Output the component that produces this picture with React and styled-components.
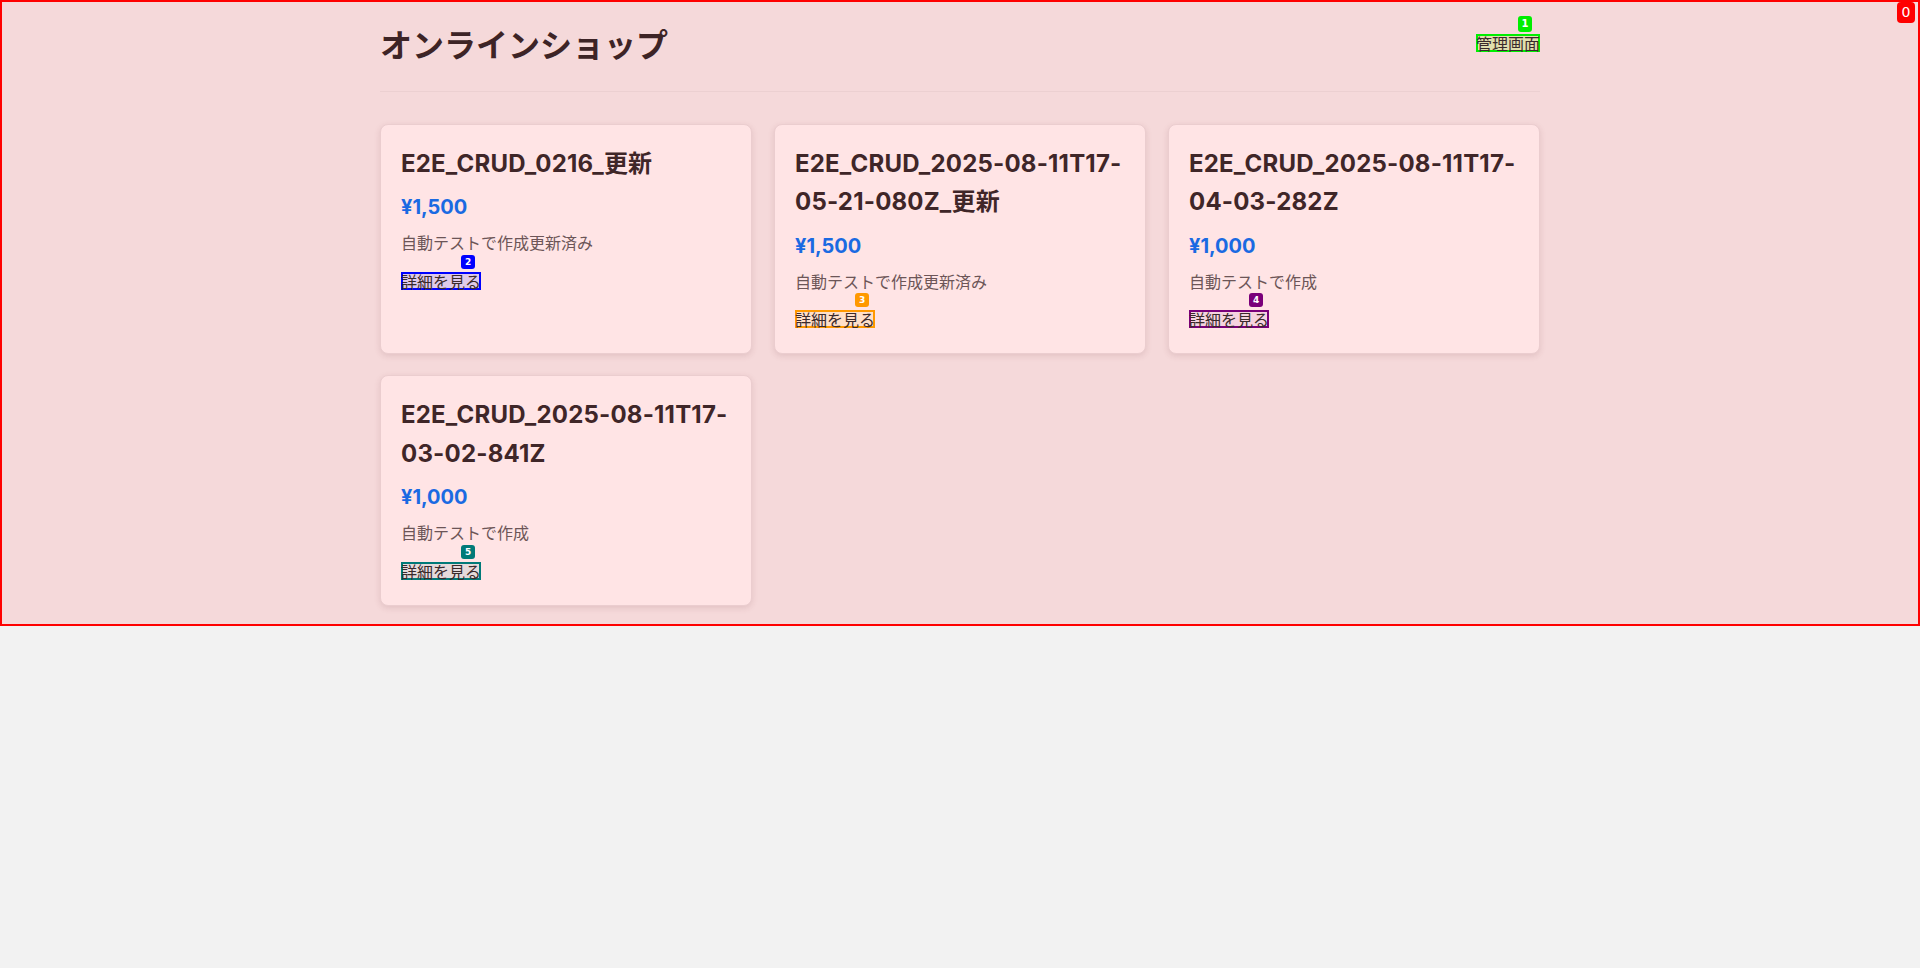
import React from "react";
import styled, { createGlobalStyle } from "styled-components";

const products = [
  { id: 1, name: "E2E_CRUD_0216_更新", price: 1500, desc: "自動テストで作成更新済み", mark: "#0000ff", fill: "rgba(80, 80, 255, 0.18)" },
  { id: 2, name: "E2E_CRUD_2025-08-11T17-05-21-080Z_更新", price: 1500, desc: "自動テストで作成更新済み", mark: "#ff9900", fill: "rgba(255, 200, 80, 0.18)" },
  { id: 3, name: "E2E_CRUD_2025-08-11T17-04-03-282Z", price: 1000, desc: "自動テストで作成", mark: "#7a007a", fill: "rgba(200, 140, 200, 0.18)" },
  { id: 4, name: "E2E_CRUD_2025-08-11T17-03-02-841Z", price: 1000, desc: "自動テストで作成", mark: "#007a78", fill: "rgba(180, 200, 200, 0.35)" }
];

const GlobalStyle = createGlobalStyle`
  body {
    margin: 0;
    background: #f2f2f2;
    font-family: Inter, "Noto Sans CJK JP", sans-serif;
  }
`;

const Page = styled.div`
  position: relative;
  background: #f5d9da;
  padding: 20px 0;
  box-shadow: inset 0 0 0 2px #ff0000;
`;

const Container = styled.div`
  max-width: 1160px;
  margin: 0 auto;
`;

const Header = styled.header`
  display: flex;
  justify-content: space-between;
  align-items: center;
  padding-bottom: 25px;
  border-bottom: 1px solid #ecd0d1;
  margin-bottom: 32px;
`;

const Title = styled.h1`
  margin: 0;
  font-family: "Noto Sans CJK JP", sans-serif;
  font-size: 32px;
  font-weight: 700;
  line-height: 46px;
  color: #3d2426;
`;

const Grid = styled.div`
  display: grid;
  grid-template-columns: repeat(3, 1fr);
  gap: 21px 22px;
`;

const Card = styled.div`
  background: #ffe4e5;
  border: 1px solid #ebcdcf;
  border-radius: 8px;
  padding: 20px 20px 21px;
  box-shadow: 0 2px 6px rgba(110, 50, 55, 0.14);
`;

const Name = styled.h3`
  margin: 0 0 8px;
  font-size: 24px;
  font-weight: 700;
  line-height: 1.6;
  letter-spacing: 0.2px;
  color: #3f2628;
`;

const Price = styled.p`
  margin: 0 0 8px;
  font-size: 20px;
  font-weight: 700;
  line-height: 1.6;
  color: #1a6ae2;
`;

const Desc = styled.p`
  margin: 0 0 11px;
  font-size: 16px;
  line-height: 1.6;
  color: #6c5557;
`;

const LinkRow = styled.div`
  display: flex;
  align-items: center;
  height: 26px;
`;

const Marked = styled.a`
  position: relative;
  display: inline-block;
  height: 18px;
  line-height: 18px;
  font-family: "Noto Sans CJK JP", sans-serif;
  font-size: 16px;
  color: #3a2a2b;
  text-decoration: none;
  background: ${p => p.$fill};
  box-shadow: inset 0 0 0 2px ${p => p.$mark};
`;

const Badge = styled.span`
  position: absolute;
  right: ${p => p.$right || 6}px;
  bottom: calc(100% + ${p => p.$lift || 3}px);
  min-width: 14px;
  height: ${p => p.$size || 14}px;
  padding: 0 2px;
  box-sizing: border-box;
  border-radius: 3px;
  background: ${p => p.$bg};
  color: #fff;
  font-family: "DejaVu Sans", sans-serif;
  font-size: ${p => p.$font || 9}px;
  font-weight: 700;
  line-height: ${p => p.$size || 14}px;
  text-align: center;
`;

const RootBadge = styled(Badge)`
  top: 2px;
  right: 5px;
  bottom: auto;
  min-width: 18px;
  height: 21px;
  line-height: 21px;
  border-radius: 4px;
  font-size: 14px;
  font-weight: 400;
`;

const yen = n => "¥" + n.toLocaleString("en-US");

export default function App() {
  return (
    <>
      <GlobalStyle />
      <Page>
        <RootBadge $bg="#ff0000">0</RootBadge>
        <Container>
          <Header>
            <Title>オンラインショップ</Title>
            <Marked href="#" $mark="#00ee00" $fill="rgba(200, 230, 120, 0.45)">
              管理画面
              <Badge $bg="#00ee00" $right={8} $lift={2} $size={16} $font={10}>1</Badge>
            </Marked>
          </Header>
          <Grid>
            {products.map((p, i) => (
              <Card key={p.id}>
                <Name>{p.name}</Name>
                <Price>{yen(p.price)}</Price>
                <Desc>{p.desc}</Desc>
                <LinkRow>
                  <Marked href="#" $mark={p.mark} $fill={p.fill}>
                    詳細を見る
                    <Badge $bg={p.mark}>{i + 2}</Badge>
                  </Marked>
                </LinkRow>
              </Card>
            ))}
          </Grid>
        </Container>
      </Page>
    </>
  );
}
